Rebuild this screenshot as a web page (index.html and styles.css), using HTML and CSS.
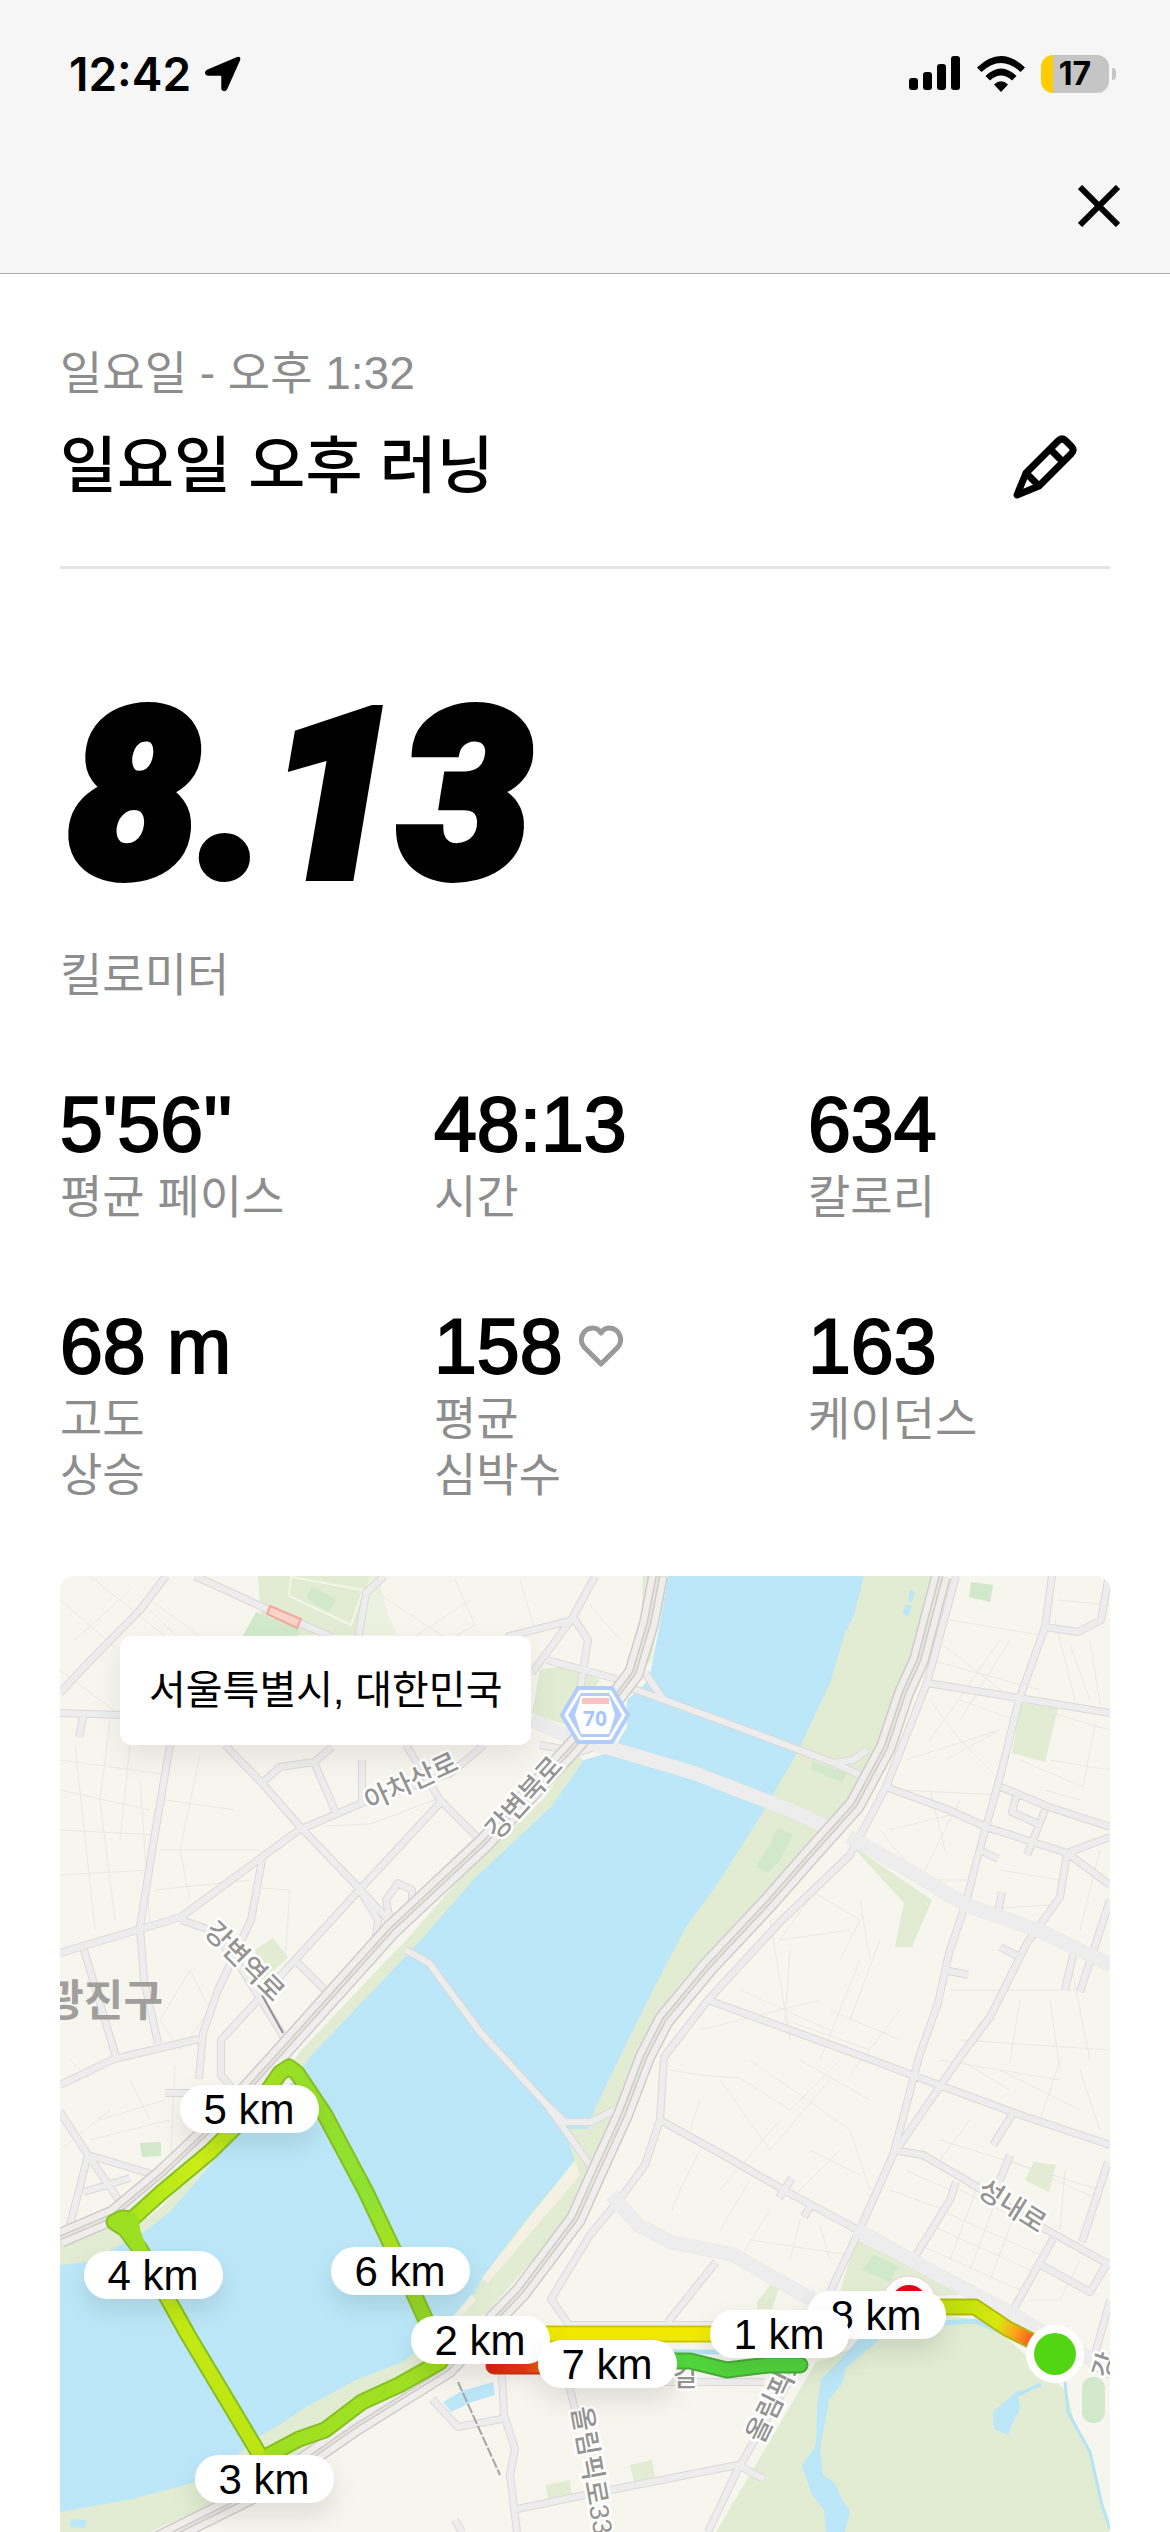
FILE: index.html
```html
<!DOCTYPE html>
<html lang="ko">
<head>
<meta charset="utf-8">
<meta name="viewport" content="width=device-width, initial-scale=1">
<title>일요일 오후 러닝</title>
<link rel="stylesheet" href="styles.css">
</head>
<body>
<header class="top">
  <div class="status">
    <div class="status-side">
      <span class="clock">12:42</span>
      <svg class="icon-location" viewBox="0 0 36 36" aria-hidden="true"><path d="M31.500 1.200Q36.500-0.600 35 4.500L22 33.500Q20.500 36 17.500 34.800Q16.300 34 16.300 32.500V20.500Q16.300 19.700 15.500 19.700H3.500Q0 19.400 0 16.500Q.2 14.800 2 13.800Z"/></svg>
    </div>
    <div class="status-side status-right">
      <svg class="icon-signal" viewBox="0 0 52 36" aria-hidden="true"><rect x="0" y="22" width="9" height="12" rx="3"/><rect x="14" y="16" width="9" height="18" rx="3"/><rect x="28" y="8" width="9" height="26" rx="3"/><rect x="42" y="0" width="9" height="34" rx="3"/></svg>
      <svg class="icon-wifi" viewBox="0 0 48 36" aria-hidden="true"><path d="M0 11.500Q24-11.500 48 11.500L43.500 16Q24-2 4.500 16Z"/><path d="M8.500 20Q24 5 39.500 20L35 24.500Q24 14.500 13 24.500Z"/><path d="M17 28.500Q24 22 31 28.500L24 36Z"/></svg>
      <span class="battery"><span class="battery-body">17</span><span class="battery-tip"></span></span>
    </div>
  </div>
  <nav class="bar">
    <button class="icon-button" type="button" aria-label="닫기">
      <svg class="icon-close" viewBox="0 0 42 42" aria-hidden="true"><path d="M2 2L40 40M40 2L2 40"/></svg>
    </button>
  </nav>
</header>
<main class="content">
  <section class="heading">
    <p class="label">일요일 - 오후 1:32</p>
    <div class="title-row">
      <h1 class="title">일요일 오후 러닝</h1>
      <button class="icon-button" type="button" aria-label="이름 편집">
        <svg class="icon-edit" viewBox="0 0 64 64" aria-hidden="true"><path d="M4 60L13 38L45 6Q49 2 53 6L58 11Q62 15 58 19L26 51Z"/><path d="M13 38L26 51M37 14L50 27"/></svg>
      </button>
    </div>
  </section>
  <section class="distance">
    <p class="distance-value">8.13</p>
    <p class="label">킬로미터</p>
  </section>
  <dl class="stats">
    <div class="stat"><dt class="label">평균 페이스</dt><dd class="value">5'56''</dd></div>
    <div class="stat"><dt class="label">시간</dt><dd class="value">48:13</dd></div>
    <div class="stat"><dt class="label">칼로리</dt><dd class="value">634</dd></div>
    <div class="stat"><dt class="label">고도<br>상승</dt><dd class="value">68 m</dd></div>
    <div class="stat"><dt class="label">평균<br>심박수</dt><dd class="value">158 <svg class="icon-heart" viewBox="0 0 44 42" aria-hidden="true"><path d="M22 39L5 22Q1 17 3 11Q6 3 14 3Q19 3 22 8Q25 3 30 3Q38 3 41 11Q43 17 39 22Z"/></svg></dd></div>
    <div class="stat"><dt class="label">케이던스</dt><dd class="value">163</dd></div>
  </dl>
  <section class="map">
    <svg class="map-canvas" viewBox="60 1576 1050 956" role="img" aria-label="러닝 경로 지도">
      <defs>
        <linearGradient id="start" gradientUnits="userSpaceOnUse" x1="938" y1="2307" x2="1034" y2="2342"><stop offset="0" stop-color="#b9dc0c"/><stop offset=".6" stop-color="#d6e80f"/><stop offset=".8" stop-color="#ffa21c"/><stop offset="1" stop-color="#f4501c"/></linearGradient>
        <linearGradient id="slow" gradientUnits="userSpaceOnUse" x1="490" y1="0" x2="560" y2="0"><stop offset="0" stop-color="#e52313"/><stop offset=".5" stop-color="#ef3a14"/><stop offset="1" stop-color="#f59a12"/></linearGradient>
        <linearGradient id="west" gradientUnits="userSpaceOnUse" x1="0" y1="2452" x2="0" y2="2220"><stop offset="0" stop-color="#bde514"/><stop offset=".6" stop-color="#c4ea14"/><stop offset="1" stop-color="#9de022"/></linearGradient>
        <linearGradient id="north" gradientUnits="userSpaceOnUse" x1="125" y1="0" x2="290" y2="0"><stop offset="0" stop-color="#a8e41e"/><stop offset=".45" stop-color="#ccee16"/><stop offset="1" stop-color="#98dd24"/></linearGradient>
        <linearGradient id="east" gradientUnits="userSpaceOnUse" x1="0" y1="2067" x2="0" y2="2330"><stop offset="0" stop-color="#98df26"/><stop offset=".5" stop-color="#8ee233"/><stop offset=".72" stop-color="#b0e01c"/><stop offset="1" stop-color="#8cd52a"/></linearGradient>
        <filter id="shadow" x="-30%" y="-50%" width="160%" height="230%"><feDropShadow dx="0" dy="12" stdDeviation="12" flood-opacity=".1"/></filter>
      </defs>

      <!-- land, parks -->
      <rect class="land" x="60" y="1576" width="1050" height="956"/>
      <g class="park">
        <path d="M258 1576H369L358 1635H262Z"/>
        <path d="M381 1588Q385 1610 397 1635H355L369 1576H381Z" opacity=".5"/>
        <path d="M540 1670Q560 1664 577 1670L600 1680L565 1725L532 1713Z"/>
        <path d="M273 1938L288 1958L262 1980L255 1950Z"/>
        <path d="M1021 1703L1058 1708L1045 1762L1012 1753Z"/>
        <path d="M851 1845L932 1900L912 1947H895L904 1903Z"/>
        <path d="M1034 2162L1056 2165L1049 2192L1025 2180Z"/>
        <path d="M856 2239L934 2279L960 2295L838 2299Z"/>
        <path d="M864 1576H932L915 1670L875 1772L855 1820L800 1865L745 1925L690 1985L640 2045L615 2119L594 2185L584 2200L488 2312L430 2340L310 2400L560 2050Z"/>
        <path d="M643 1576H668L651 1660L640 1670Z"/>
        <path d="M60 2235L140 2210L170 2245L60 2290Z"/>
        <path d="M60 2500L200 2460L262 2425L306 2390L420 2340L470 2355L354 2426L195 2512L150 2532H60Z"/>
        <path d="M816 2362L942 2315L980 2320L1008 2339L1067 2392L1075 2425L1090 2449L1102 2505L1110 2532H716L775 2432Z"/>
        <path d="M546 2485L570 2480L572 2498L548 2501ZM630 2465L652 2460L656 2483L634 2482ZM770 2285L780 2286L772 2309H757V2302Z"/>
      </g>
      <g class="field">
        <path d="M256 1612L300 1630L297 1636H243Z"/>
        <path d="M312 1587L337 1600L328 1612L306 1598Z"/>
        <path d="M971 1582L993 1585L990 1602L969 1597Z"/>
        <path d="M874 2255L898 2266L890 2282L862 2270Z"/>
        <path d="M140 2143L161 2142V2156L142 2157Z"/>
        <path d="M778 1828L793 1835L780 1860L768 1873L756 1866L768 1848Z"/>
        <path d="M812 1762L847 1773L842 1782L811 1770Z"/>
        <rect x="1082" y="2377" width="23" height="46" rx="11"/>
      </g>
      <path d="M291 1577L363 1590L351 1625L289 1596Z" fill="none" stroke="#f4f6ea" stroke-width="2"/>

      <!-- river -->
      <path class="bank" d="M584 1760L551 1807L473 1880L421 1940L310 2057L292 2082M236 2140L170 2214L140 2238"/>
      <path class="water" d="M668 1576L660 1623L649 1680L627 1700V1727L612 1752L584 1760L551 1807L473 1880L421 1940L310 2057L292 2082L236 2135L170 2212L140 2235L88 2262L60 2265V2512L132 2499L207 2479L262 2435L284 2422L306 2407L358 2379L403 2362L440 2332L473 2295L484 2275L532 2212L575 2162L565 2129L588 2129L595 2112L590 2119L627 2042L653 1990L686 1927L720 1880L760 1817L797 1753L830 1683L845 1633L854 1615L864 1576Z"/>
      <path d="M575 2160L580 2175L488 2283L482 2278ZM472 2294L476 2300L445 2335H438Z" fill="#f4f1e4"/>
      <g class="water">
        <path d="M879 2340L845 2369L843 2382L829 2400L820 2449L823 2475L835 2483L842 2500L850 2512L845 2532H826L824 2510L812 2495L802 2466L816 2445L817 2405L821 2380L840 2360L862 2335Z"/>
        <path d="M1041 2384L1016 2392L993 2412L994 2429L1008 2435L1012 2424L1020 2409L1018 2395Z"/>
        <path d="M443 2402L462 2391L493 2382L495 2395L472 2402L451 2412Z"/>
        <path d="M910 1590L915 1592L912 1602H908ZM905 1605H912L908 1617L903 1613ZM71 2519L87 2520L85 2528L70 2527Z"/>
      </g>
      <path class="stream" d="M660 2352H740M942 2323L975 2321L1005 2333L1032 2347"/>
      <path class="stream stream-thin" d="M1018 2395L1041 2384M1065 2382L1068 2412L1090 2452L1102 2505L1110 2529"/>

      <!-- lanes -->
      <path class="lane" d="M60 1600L130 1660M90 1576L170 1640M75 1640L130 1590M130 1640L200 1710M150 1610L210 1670M60 1670L120 1715M150 1600L200 1636M60 1790L150 1810M60 1830L160 1835M60 1875L150 1870M75 1745L95 1930M110 1720L100 1800L115 1920M130 1745L120 1840M60 1760L170 1775M200 1755L180 1850L190 1900M165 1800L235 1810M160 1850L260 1850M155 1890L250 1880M140 1780L150 1925M290 1890L284 1975L270 1980M262 1888L288 1890M380 1595L480 1660M455 1580L475 1625L430 1650M410 1640L470 1600M520 1580L535 1630M590 1605L620 1640M325 1826L370 1824L440 1798M450 1860L500 1815M175 2065L170 2175M60 2150L110 2110M100 2120L165 2100M90 2140L170 2120M130 2080L150 2120M70 2060L90 2080M190 1970L210 2010L180 2050L160 2020Z"/>
      <path class="lane" d="M950 1620L1040 1635M943 1645L1020 1705M930 1660L1040 1690M1000 1640L930 1740M1010 1640L960 1720M930 1700L960 1740L1000 1780M905 1760L1000 1730M945 1760L1000 1730M960 1700L1015 1720M900 1790L1000 1795M960 1800L920 1880M930 1790L945 1850M890 1830L950 1815M880 1830L920 1880L970 1880M1058 1600L1110 1605M1055 1620L1075 1700M1090 1640L1100 1705M1070 1645L1090 1700M1040 1710L1110 1730M1050 1760L1110 1770M1045 1790L1080 1800M1100 1850L1080 1930M1020 1760L1083 1787L1095 1725M1000 1870L1060 1880M970 1910L1050 1905M810 1890L860 1920L840 1960M830 1870L780 1940L850 1930M860 1900L870 1960M790 1950L785 2020L870 2050M740 1990L830 2030M860 1960L820 2060M880 1940L850 2020M770 1920L790 2040M830 2010L900 2040M700 2030L820 2000M900 2010L850 2075M950 1990L1080 1990M960 2040L1110 2050M1020 2000L1010 2060M1050 2000L1060 2070M1070 1960L1090 2060M940 2060L1060 2080"/>
      <path class="lane" d="M670 2070L700 2075L740 2078L790 2110L840 2060M700 2100L690 2130M720 2080L770 2150L830 2080M750 2060L850 2130L870 2190M800 2060L870 2100M780 2120L720 2190M840 2150L790 2200M700 2150L680 2190L672 2210M810 2150L860 2175M750 2180L720 2230M960 2060L1010 2090M1000 2070L1080 2110M1060 2060L1040 2120M1080 2070L1100 2130M940 2140L1100 2190M970 2120L940 2160M1010 2160L1100 2200M960 2190L1040 2230M940 2210L1040 2255M930 2225L1030 2270M920 2245L1020 2290M980 2180L950 2260M1000 2190L970 2270M1020 2200L990 2280M1065 2170L1060 2230M1080 2260L1060 2300L1030 2300M905 2170L950 2190M890 2190L945 2210M770 2210L745 2250M800 2220L790 2260M820 2225L830 2260M750 2240L850 2255"/>

      <!-- streets: a darker casing under each fill -->
      <g class="casing">
        <path id="streets" d="M166 1576L140 1610L88 1663L60 1693M195 1576L269 1610L332 1637M384 1576L366 1593L358 1640M595 1576L573 1617L532 1673M573 1617L588 1640L580 1690M573 1620L506 1637M547 1660L620 1680M60 1713L120 1715M84 1713L79 1737M170 1745L155 1833L140 1927L144 1980L158 2043M225 1745L262 1783L303 1830L358 1887L395 1927M484 1745L451 1773L362 1803L299 1830L258 1860L181 1917L60 1953M262 1860L251 1920L218 1990L203 2033L199 2079M440 1803L362 1887L295 1960L221 2040V2075L232 2088M181 1920L210 1930L236 1960L284 2037M84 1950L116 2057M60 2085L114 2059L199 2039M406 1745L440 1800L477 1837M362 1760V1803M336 1813L314 1762L332 1747M262 1783L280 1767L314 1762M358 1887L378 1920L375 1945M390 1920L386 1900L398 1883L412 1890V1905M295 1960L330 1995M60 2112L88 2155L118 2199L140 2210M88 2155L70 2225M88 2155L155 2175M84 2192L130 2178M165 2093H215M1052 1576L1045 1627L1019 1700L1001 1773L986 1827L975 1867L966 1903L949 1953L938 2003L919 2057L908 2099L893 2155L860 2229L830 2292M1045 1627L1078 1632L1101 1620L1108 1580M927 1683L1019 1698L1110 1713M886 1787L949 1810L986 1827L1067 1853L1110 1837M1001 1787L1049 1807L1110 1827M1045 1810L1027 1855M1016 1797L1012 1812L1040 1825M1067 1853L1060 1897L1027 1943L990 2017L960 2057L897 2149M1067 1853L1110 1885M980 1850L998 1859M1002 1892L998 1912M945 1970L968 1975M1000 1947L1020 1957M1073 1955L1065 1990M1110 1900L1080 1992M708 2000L790 2030L864 2057L912 2075L1012 2112L1110 2145M1012 2115L993 2145M1010 2155L998 2185M956 1576L927 1683L886 1787L850 1855L782 1920L708 2000L664 2057L660 2120L645 2165L623 2195L590 2235L551 2299L569 2325M660 2120L723 2155L782 2189L856 2229M792 2178L779 2198M811 2205L804 2217M893 2150L923 2155L964 2179L1045 2229L1110 2265M956 2182L950 2200L916 2255M1053 2239L1012 2312M1108 2162L1082 2242M1041 2265L1090 2292L1108 2262M716 2262L668 2322M569 2325H815M590 2382H764M590 2494L738 2465L764 2479M517 2509L590 2494M810 2345L738 2469L708 2532M569 2385L580 2430M432 2399L458 2427L502 2419M502 2375L504 2415L515 2449L510 2475L517 2532M455 2520L462 2532M1110 2300L1092 2365L1110 2375"/>
        <path class="wide" id="avenues" d="M856 2229L927 2269L1008 2312L1110 2370M612 2195L638 2225L671 2242L734 2255L775 2279L812 2299M849 1837L908 1870L966 1905L1038 1930L1110 1965M616 1750L694 1773L790 1810L840 1833M532 1720L569 1737L616 1750"/>
        <path id="bridges" d="M623 1685L738 1727L834 1763L864 1777M645 1673L664 1700M834 1763L853 1760L867 1750M406 1950L429 1963L480 2032L547 2105L597 2175M547 2105L565 2122H591L617 2109M540 1745L580 1752L600 1745"/>
      </g>
      <use href="#streets" class="fill"/>
      <use href="#avenues" class="fill-wide"/>
      <use href="#bridges" class="fill"/>

      <!-- expressways on both banks -->
      <g class="express">
        <path id="express" d="M941 1576L919 1660L904 1693L886 1747L855 1805L812 1853L768 1903L708 1967L664 2020L645 2057L623 2115L597 2172L576 2219L521 2292L447 2369L354 2427L269 2486L150 2545M658 1576L649 1623L634 1673L612 1702L573 1747L484 1843L391 1930L277 2057L218 2122L162 2175L114 2215L60 2238"/>
      </g>
      <use href="#express" class="express-fill"/>
      <use href="#express" class="express-mid"/>
      <use href="#express" class="express-gap"/>

      <path d="M270 1606L301 1619L297 1628L267 1614Z" fill="#f9d3ca" stroke="#f2a99c" stroke-width="2"/>
      <path d="M458 2382L500 2475" fill="none" stroke="#a5a5a5" stroke-width="2" stroke-dasharray="10 2"/>
      <path d="M262 1995L283 2033" fill="none" stroke="#8f8f8f" stroke-width="2"/>

      <!-- street names -->
      <g class="name">
        <text transform="translate(415 1790) rotate(-25)">아차산로</text>
        <text transform="translate(531 1804) rotate(-48)">강변북로</text>
        <text transform="translate(238 1968) rotate(45)">강변역로</text>
        <text transform="translate(1007 2214) rotate(32)">성내로</text>
        <text transform="translate(784 2400) rotate(-64)">올림픽로</text>
        <text transform="translate(583 2472) rotate(80)">올림픽로33</text>
        <text x="685" y="2386">길</text>
        <text transform="translate(1114 2368) rotate(-72)">강</text>
      </g>
      <text class="district" x="163" y="2016">광진구</text>

      <!-- route 70 shield -->
      <path d="M578 1688H612L628 1715L612 1742H578L562 1715Z" fill="#fff" stroke="#b3cdfb" stroke-width="4"/>
      <path d="M581 1693H609L622 1715L609 1737H581L568 1715Z" fill="#b3cdfb"/>
      <path d="M581 1696H609L615 1715L609 1734H581L575 1715Z" fill="#fff"/>
      <rect x="582" y="1698" width="27" height="6" fill="#fbc0c0"/>
      <text class="shield" x="595" y="1726">70</text>

      <!-- run -->
      <circle cx="909" cy="2303" r="27" fill="#fff" stroke="#f4c9cb"/><circle cx="909" cy="2303" r="18" fill="#e30613"/>
      <g class="run-edge">
        <path d="M269 2455L299 2439L325 2430L362 2402L399 2385L440 2362" stroke="#86bf20"/>
        <path d="M258 2452L188 2335L140 2249L125 2229L114 2222L122 2218L132 2219L162 2192L210 2152L258 2105L280 2073L289 2067L297 2073L325 2115L366 2192L410 2285L428 2325" stroke="#86bf20"/>
        <path d="M480 2334H732" stroke="#d0c400"/>
        <path d="M494 2366H560" stroke="#cc3512"/>
        <path d="M660 2361H690L727 2370L768 2365H800" stroke="#47ae36"/>
        <path d="M930 2307H975L1008 2329L1034 2342" stroke="#b0b70f"/>
      </g>
      <g class="run">
        <path d="M269 2455L299 2439L325 2430L362 2402L399 2385L440 2362" stroke="#9fe022"/>
        <path d="M258 2452L188 2335L140 2249L125 2229" stroke="url(#west)"/>
        <path d="M130 2221L162 2192L210 2152L258 2105L280 2073L289 2067" stroke="url(#north)"/>
        <path d="M140 2249L125 2229L114 2222L122 2218L132 2219L134 2232Z" stroke="#9de022" fill="#9de022"/>
        <path d="M289 2067L297 2073L325 2115L366 2192L410 2285L428 2325" stroke="url(#east)"/>
        <path d="M480 2334H732" stroke="#f0e900"/>
        <path d="M494 2366H560" stroke="url(#slow)"/>
        <path d="M660 2361H690L727 2370L768 2365H800" stroke="#52d63c"/>
        <path d="M930 2307H975L1008 2329L1034 2342" stroke="url(#start)"/>
      </g>
      <circle cx="1055" cy="2354" r="29" fill="#fff"/><circle cx="1055" cy="2354" r="21" fill="#52d613"/>

      <!-- kilometre marks -->
      <g class="mark">
        <g><rect x="180" y="2085" width="139" height="48" rx="24"/><text x="249" y="2124">5 km</text></g>
        <g><rect x="84" y="2251" width="139" height="48" rx="24"/><text x="153" y="2290">4 km</text></g>
        <g><rect x="331" y="2247" width="139" height="48" rx="24"/><text x="400" y="2286">6 km</text></g>
        <g><rect x="195" y="2455" width="139" height="48" rx="24"/><text x="264" y="2494">3 km</text></g>
        <g><rect x="411" y="2316" width="139" height="48" rx="24"/><text x="480" y="2355">2 km</text></g>
        <g><rect x="538" y="2340" width="139" height="48" rx="24"/><text x="607" y="2379">7 km</text></g>
        <g><rect x="807" y="2291" width="139" height="48" rx="24"/><text x="876" y="2330">8 km</text></g>
        <g><rect x="710" y="2310" width="139" height="48" rx="24"/><text x="779" y="2349">1 km</text></g>
      </g>
    </svg>
    <p class="place">서울특별시, 대한민국</p>
  </section>
</main>
</body>
</html>
```
FILE: styles.css
```css
* { box-sizing: border-box; }
body {
  margin: 0;
  background: #fff;
  color: #000;
  font-family: "Liberation Sans", "Noto Sans CJK KR", sans-serif;
}
h1, p, dl, dd { margin: 0; }
svg { display: block; flex: none; }
.icon-button {
  display: flex;
  padding: 0;
  border: 0;
  background: none;
  color: inherit;
}

/* header */
.top { background: #f6f6f6; border-bottom: 1px solid #acacae; }
.status {
  display: flex;
  align-items: center;
  justify-content: space-between;
  padding: 46px 54px 0 69px;
}
.status-side { display: flex; align-items: center; gap: 14px; }
.status-right { gap: 16px; }
.clock { font: 600 46px/56px Inter, sans-serif; }
.icon-location { width: 36px; height: 36px; }
.icon-signal { width: 52px; height: 36px; }
.icon-wifi { width: 48px; height: 36px; }
.battery { display: flex; align-items: center; gap: 3px; }
.battery-body {
  width: 68px;
  border-radius: 12px;
  background: linear-gradient(90deg, #ffcc00 12px, #c5c5c5 12px);
  font: 700 32px/38px Inter, sans-serif;
  text-align: center;
}
.battery-tip { width: 4px; height: 12px; border-radius: 0 4px 4px 0; background: #c5c5c5; }
.bar { display: flex; justify-content: flex-end; padding: 83px 50px 46px; }
.icon-close { width: 42px; height: 42px; fill: none; stroke: #000; stroke-width: 6; }

/* summary */
.content { padding: 0 60px; }
.label { color: #8d8d8d; font-size: 46px; line-height: 56px; font-weight: 400; }
.heading { padding: 71px 0 61px; border-bottom: 3px solid #e5e5e5; }
.title-row {
  display: flex;
  align-items: center;
  justify-content: space-between;
  margin-top: 28px;
  padding-right: 33px;
}
.title { font-size: 62px; line-height: 76px; font-weight: 500; }
.icon-edit { width: 64px; height: 64px; fill: none; stroke: #000; stroke-width: 7; stroke-linejoin: round; }
.distance { padding-top: 107px; }
.distance-value {
  margin-bottom: 31px;
  padding-left: 8px;
  font: italic 900 234px/240px Roboto, sans-serif;
  -webkit-text-stroke: 10px #000;
}
.stats {
  display: grid;
  grid-template-columns: repeat(3, 1fr);
  gap: 76px 72px;
  margin: 76px 0 73px;
}
.stat { display: flex; flex-direction: column-reverse; justify-content: flex-end; }
.value {
  display: flex;
  align-items: center;
  gap: 17px;
  font-size: 77px;
  line-height: 90px;
  -webkit-text-stroke: 2px #000;
}
.icon-heart { width: 44px; height: 42px; fill: none; stroke: #9a9a9a; stroke-width: 5; stroke-linejoin: round; }

/* map */
.map { position: relative; border-radius: 14px 14px 0 0; overflow: hidden; }
.map-canvas { width: 100%; height: auto; }
.place {
  position: absolute;
  left: 60px;
  top: 60px;
  padding: 0 29px;
  border-radius: 12px;
  background: #fff;
  box-shadow: 0 12px 30px rgba(0, 0, 0, .08);
  font-size: 40px;
  line-height: 109px;
}
.land { fill: #f6f6ee; }
.park { fill: #e1ecd2; }
.field { fill: #d2e8cb; }
.water { fill: #bbe7f8; }
.bank { fill: none; stroke: #e1ecd2; stroke-width: 22; }
.stream { fill: none; stroke: #b6e4f5; stroke-width: 5; }
.stream-thin { stroke-width: 3; }
.lane { fill: none; stroke: #e9e8e1; stroke-width: 1; }
.casing { fill: none; stroke: #dbd9d8; stroke-width: 8; stroke-linejoin: round; }
.casing .wide { stroke-width: 14; }
.fill { fill: none; stroke: #eeedee; stroke-width: 6; stroke-linejoin: round; }
.fill-wide { fill: none; stroke: #eeedee; stroke-width: 11; stroke-linejoin: round; }
.express { fill: none; stroke: #cfccc9; stroke-width: 20; }
.express-fill { fill: none; stroke: #efeeec; stroke-width: 17; }
.express-mid { fill: none; stroke: #cfccc9; stroke-width: 5; }
.express-gap { fill: none; stroke: #e6e6de; stroke-width: 2; }
.name {
  font-size: 27px;
  font-weight: 500;
  text-anchor: middle;
  fill: #959492;
  stroke: #fff;
  stroke-width: 5;
  stroke-linejoin: round;
  paint-order: stroke;
}
.district { font-size: 43px; font-weight: 700; text-anchor: end; fill: #a19f9b; }
.shield { font: 700 21px "Noto Sans", sans-serif; text-anchor: middle; fill: #a9c6fa; }
.run, .run-edge { fill: none; stroke-width: 13; stroke-linejoin: round; stroke-linecap: round; }
.run-edge { stroke-width: 17; }
.mark rect { fill: #fff; filter: url(#shadow); }
.mark text { font-size: 42px; text-anchor: middle; }
```
